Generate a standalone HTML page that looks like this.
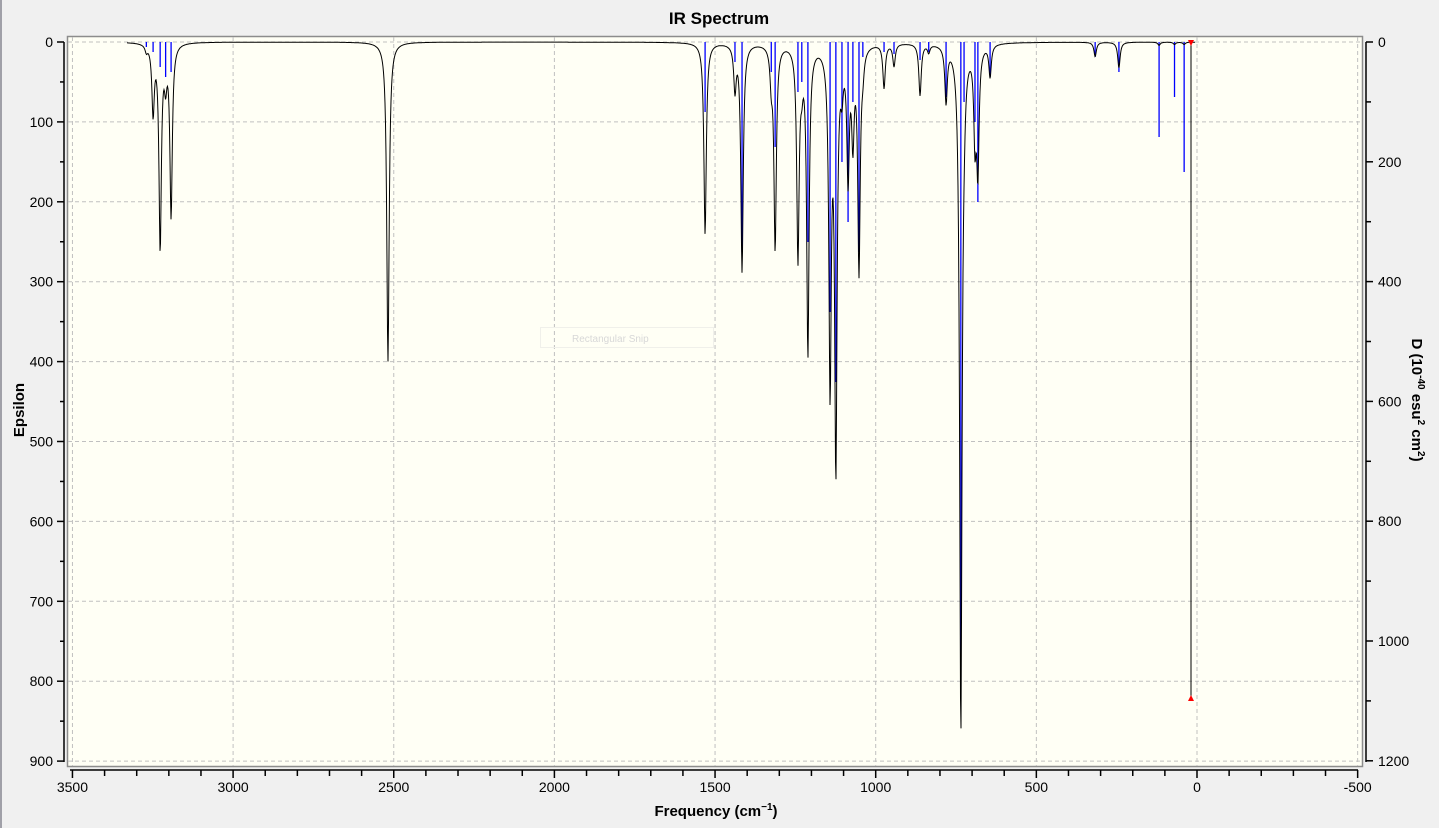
<!DOCTYPE html>
<html><head><meta charset="utf-8"><style>
html,body{margin:0;padding:0;background:#f0f0f0;width:1439px;height:828px;overflow:hidden}
svg{display:block;font-family:"Liberation Sans",sans-serif}
</style></head><body>
<svg id="s" width="1439" height="828" xmlns="http://www.w3.org/2000/svg">
<rect x="0" y="0" width="1439" height="828" fill="#f0f0f0"/>
<rect x="0" y="0" width="2" height="828" fill="#a0a0a8"/>
<rect x="67.5" y="36.5" width="1295" height="730" fill="#fffff5" stroke="#8c8c8c" stroke-width="1.5"/>
<g id="grid" stroke="#c0c0c0" stroke-dasharray="4,3" stroke-width="1"></g>
<g id="spec"></g>
<g id="axes" stroke="#000" stroke-width="1.5" fill="none"></g>
<g id="labels" font-size="14" fill="#000"></g>
<rect x="540.5" y="327.5" width="173" height="20" fill="none" stroke="#f0f0ea"/>
<text x="572" y="342" font-size="10" fill="#d8d8d8">Rectangular Snip</text>
<text x="719" y="24" font-size="17" font-weight="bold" text-anchor="middle">IR Spectrum</text>
<text x="716" y="816" font-size="15" font-weight="bold" text-anchor="middle">Frequency (cm<tspan dy="-6" font-size="10">−1</tspan><tspan dy="6">)</tspan></text>
<text transform="translate(24,410) rotate(-90)" font-size="15" font-weight="bold" text-anchor="middle">Epsilon</text>
<text transform="translate(1412,400) rotate(90)" font-size="15" font-weight="bold" text-anchor="middle">D (10<tspan dy="-6" font-size="10">-40</tspan><tspan dy="6"> esu</tspan><tspan dy="-6" font-size="10">2</tspan><tspan dy="6"> cm</tspan><tspan dy="-6" font-size="10">2</tspan><tspan dy="6">)</tspan></text>
</svg>
<script>
var NS="http://www.w3.org/2000/svg";
function el(p,t,a,txt){var e=document.createElementNS(NS,t);for(var k in a)e.setAttribute(k,a[k]);if(txt!=null)e.textContent=txt;document.getElementById(p).appendChild(e);return e;}
function fx(f){return 1197-0.3213*f;}
function ey(e){return 42+0.799*e;}
for(var f=3500;f>=-500;f-=500){var x=fx(f);el('grid','line',{x1:x,y1:37,x2:x,y2:766});}
for(var e=0;e<=900;e+=100){var y=ey(e);el('grid','line',{x1:68,y1:y,x2:1362,y2:y});}
el('axes','line',{x1:64,y1:42,x2:64,y2:762});
for(var e=0;e<=900;e+=50){var y=ey(e);el('axes','line',{x1:e%100?60:57,y1:y,x2:64,y2:y});
 if(e%100==0)el('labels','text',{x:53,y:y+5,'text-anchor':'end'},e);}
el('axes','line',{x1:1366,y1:42,x2:1366,y2:762});
for(var d=0;d<=1200;d+=100){var y=42+d*0.599;el('axes','line',{x1:1366,y1:y,x2:d%200?1371:1373,y2:y});
 if(d%200==0)el('labels','text',{x:1378,y:y+5},d);}
el('axes','line',{x1:70,y1:770,x2:1358,y2:770});
for(var f=3500;f>=-500;f-=100){var x=fx(f);el('axes','line',{x1:x,y1:770,x2:x,y2:f%500?776:778});
 if(f%500==0)el('labels','text',{x:x,y:792,'text-anchor':'middle'},f);}
var P=[[3249,85,10],[3227,255,25],[3193,215,30],[3270,8,5],[3210,40,35],[2518,400,0],
[1531,240,70],[1438,55,20],[1416,285,210],[1313,255,105],[1325,40,30],[1242,265,50],[1211,385,200],[1230,30,40],
[1142,420,270],[1124,520,340],[1105,40,120],[1086,160,180],[1071,110,60],[1052,280,210],[1040,20,15],
[974,55,10],[943,28,12],[862,65,18],[835,10,10],[781,70,55],[735,860,650],[725,30,60],[691,110,80],[682,150,160],[644,40,35],
[317,18,15],[243,32,30],[118,4,95],[70,3,55],[40,3,130]];
var g=4.5,d="";
for(var x=127;x<=1195;x+=0.5){var f=(1197-x)/0.3213,s=0;
 for(var i=0;i<P.length;i++){var u=(f-P[i][0])/g;s+=P[i][1]/(1+u*u);}
 d+=(d?"L":"M")+x.toFixed(1)+","+ey(s).toFixed(1);}
for(var i=0;i<P.length;i++){if(!P[i][2])continue;var x=fx(P[i][0]);
 el('spec','line',{x1:x,y1:42,x2:x,y2:42+P[i][2],stroke:'#0000ff','stroke-width':1.3});}
el('spec','path',{d:d,fill:'none',stroke:'#000','stroke-width':1});
el('spec','line',{x1:1191,y1:42,x2:1191,y2:697,stroke:'#000','stroke-width':1});
el('spec','polygon',{points:'1188,40 1194,40 1191,46',fill:'#f00'});
el('spec','polygon',{points:'1188,701 1194,701 1191,695',fill:'#f00'});
</script>
</body></html>
